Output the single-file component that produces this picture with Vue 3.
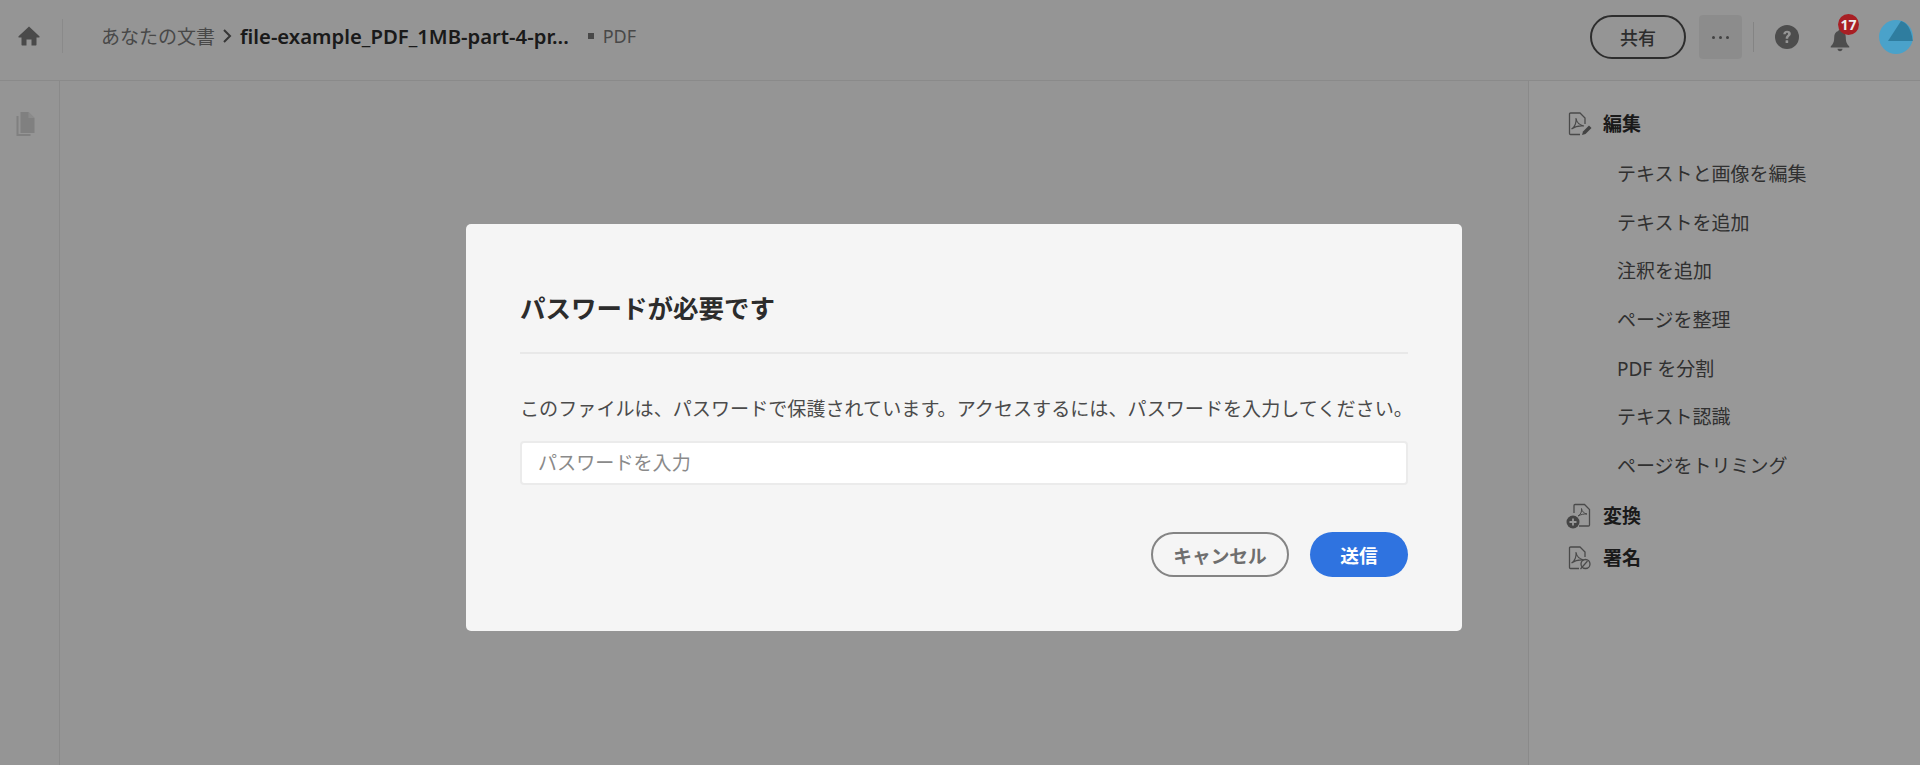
<script setup>
const crumbs = { parent: 'あなたの文書', file: 'file-example_PDF_1MB-part-4-pr...', kind: 'PDF' }
const editItems = ['テキストと画像を編集', 'テキストを追加', '注釈を追加', 'ページを整理', 'PDF を分割', 'テキスト認識', 'ページをトリミング']
</script>

<template>
  <div class="page">
    <header class="topbar">
      <div class="home-cell">
        <svg class="home" viewBox="0 0 22 20" width="22" height="20"><path d="M11 .5.6 10.200c-.5.5-.2 1.300.5 1.300H3.500v7.300c0 .4.3.7.7.7h4.300v-6h5v6h4.300c.4 0 .7-.3.7-.7v-7.300h2.400c.7 0 1-.8.5-1.300z" fill="#7c7c7c" /></svg>
      </div>
      <nav class="crumbs">
        <span class="parent">{{ crumbs.parent }}</span>
        <svg class="chev" viewBox="0 0 10 16" width="10" height="16"><path d="M2 2l6 6-6 6" fill="none" stroke="#5a5a5a" stroke-width="2" /></svg>
        <span class="file">{{ crumbs.file }}</span>
        <span class="dot"></span>
        <span class="kind">{{ crumbs.kind }}</span>
      </nav>
      <div class="actions">
        <button class="share">共有</button>
        <button class="more"><i></i><i></i><i></i></button>
        <span class="vsep"></span>
        <svg class="help" viewBox="0 0 22 22" width="24" height="24"><circle cx="11" cy="11" r="11" fill="#808080" /><path d="M7.600 8.400c0-2 1.500-3.200 3.500-3.200s3.400 1.100 3.400 2.900c0 2.400-2.400 2.400-2.400 4.400H9.800c0-3 2.200-3 2.200-4.400 0-.7-.4-1.100-1-1.100-.7 0-1.100.5-1.100 1.400z" fill="#f8f8f8" /><rect x="9.700" y="14" width="2.400" height="2.600" rx=".5" fill="#f8f8f8" /></svg>
        <div class="bell-wrap">
          <svg class="bell" viewBox="0 0 20 24" width="20" height="24"><path d="M10 1.500c-1 0-1.600.7-1.600 1.600C5.600 3.900 4.200 6.200 4.200 9.200c0 4.800-1.200 7-3.500 9.200v1.100h18.600v-1.100c-2.300-2.200-3.500-4.400-3.500-9.200 0-3-1.400-5.300-4.200-6.100 0-.9-.6-1.600-1.600-1.600z" fill="#808080" /><path d="M7.500 20.700h5c0 1.500-1.100 2.500-2.500 2.500s-2.500-1-2.500-2.500z" fill="#808080" /></svg>
          <span class="badge">17</span>
        </div>
        <svg class="avatar" viewBox="0 0 34 34" width="34" height="34"><circle cx="17" cy="17" r="17" fill="#4aa2ca" /><path d="M9 21 22 1c5 1.500 10 6 11.800 20z" fill="#2f7d9f" /></svg>
      </div>
    </header>

    <div class="body">
      <aside class="rail">
        <svg class="docs" viewBox="0 0 20 24" width="21" height="24"><path d="M5 0h8l6 6v15H5z" fill="#d6d6d6" /><path d="M13 0v6h6z" fill="#e8e8e8" /><path d="M2 4v19h13" fill="none" stroke="#d6d6d6" stroke-width="2" /></svg>
      </aside>
      <main class="canvas"></main>
      <aside class="tools">
        <div class="group head">
          <svg class="gicon" viewBox="0 0 24 24" width="24" height="24"><path d="M12 22.500H2.500a1 1 0 0 1-1-1V2a1 1 0 0 1 1-1h9.500l5 5v6" fill="none" stroke="#7c7c7c" stroke-width="1.300" /><path d="M3.500 17c3-2 5-6 4.500-11 .5 4 3 7 8 8-5-.5-9 .5-12.500 3z" fill="none" stroke="#7c7c7c" stroke-width="1.100" /><path d="m14 23 1-3.500 6-6 2.500 2.500-6 6z" fill="#707070" /></svg>
          <span>編集</span>
        </div>
        <ul class="items">
          <li v-for="item in editItems" :key="item">{{ item }}</li>
        </ul>
        <div class="group convert">
          <svg class="gicon" viewBox="0 0 26 26" width="26" height="26"><path d="M8 10V2.500a1 1 0 0 1 1-1h9.500l5 5V22a1 1 0 0 1-1 1H13" fill="none" stroke="#7c7c7c" stroke-width="1.300" /><path d="M12 13c2.500-1.500 4-4 3.500-7.500.5 3 2.500 5 5.500 5.500-3-.2-6.500.5-9 2z" fill="none" stroke="#7c7c7c" stroke-width="1" /><circle cx="7" cy="19" r="6.500" fill="#737373" /><path d="M3.500 19h7M7 15.500v7" stroke="#fdfdfd" stroke-width="1.800" /></svg>
          <span>変換</span>
        </div>
        <div class="group sign">
          <svg class="gicon" viewBox="0 0 24 24" width="24" height="24"><path d="M11 22.500H2.500a1 1 0 0 1-1-1V2a1 1 0 0 1 1-1h9.500l5 5v5" fill="none" stroke="#7c7c7c" stroke-width="1.300" /><path d="M3.500 17c3-2 5-6 4.500-11 .5 4 3 7 8 8-5-.5-9 .5-12.500 3z" fill="none" stroke="#7c7c7c" stroke-width="1.100" /><circle cx="17.500" cy="18" r="4.500" fill="none" stroke="#7c7c7c" stroke-width="1.300" /><path d="M12.500 23l7-8" stroke="#7c7c7c" stroke-width="1.200" /></svg>
          <span>署名</span>
        </div>
      </aside>
    </div>

    <div class="scrim">
      <section class="dialog">
        <h2 class="title">パスワードが必要です</h2>
        <p class="msg">このファイルは、パスワードで保護されています。アクセスするには、パスワードを入力してください。</p>
        <input class="pw" type="text" placeholder="パスワードを入力" />
        <div class="btns">
          <button class="cancel">キャンセル</button>
          <button class="send">送信</button>
        </div>
      </section>
    </div>
  </div>
</template>

<style>
html, body { margin: 0; background: #f8f8f8; overflow: hidden; }
</style>

<style scoped>
.page {
  position: relative;
  height: 765px;
  display: flex;
  flex-direction: column;
  background: #f8f8f8;
  font-family: "Noto Sans", "Noto Sans CJK JP", sans-serif;
  color: #505050;
}
.topbar {
  height: 80px;
  flex: none;
  display: flex;
  align-items: center;
  border-bottom: 1px solid #e6e6e6;
}
.home-cell {
  width: 63px;
  height: 34px;
  flex: none;
  margin-top: -8px;
  display: flex;
  align-items: center;
  justify-content: center;
  box-sizing: border-box;
  border-right: 1px solid #e6e6e6;
  padding-right: 4px;
}
.crumbs {
  margin-left: 38px;
  margin-top: -8px;
  display: flex;
  align-items: center;
  font-size: 19px;
}
.parent { color: #787878; }
.chev { margin: 0 8px 0 7px; }
.file { font-weight: 600; color: #2c2c2c; font-size: 20.300px; white-space: nowrap; }
.dot { width: 6px; height: 6px; background: #787878; margin: 0 9px 0 19px; }
.kind { color: #787878; font-size: 18px; }
.actions {
  margin-left: auto;
  margin-top: -6px;
  display: flex;
  align-items: center;
  padding-right: 7px;
}
.share {
  width: 96px;
  height: 44px;
  border: 2px solid #4b4b4b;
  border-radius: 22px;
  background: none;
  font: 500 18px "Noto Sans CJK JP", sans-serif;
  color: #4b4b4b;
  padding: 0;
}
.more {
  width: 43px;
  height: 44px;
  margin-left: 13px;
  border: 0;
  border-radius: 4px;
  background: #eaeaea;
  display: flex;
  align-items: center;
  justify-content: center;
  gap: 4px;
  padding: 0;
}
.more i { width: 3px; height: 3px; border-radius: 50%; background: #6e6e6e; }
.vsep { width: 1px; height: 30px; background: #dcdcdc; margin: 0 21px 0 11px; }
.bell-wrap { position: relative; width: 20px; height: 24px; margin: 6px 29px 0 31px; }
.badge {
  position: absolute;
  z-index: 2;
  left: 8px;
  top: -14px;
  width: 21px;
  height: 21px;
  border-radius: 50%;
  background: #a81f24;
  color: #eee;
  font: 700 14px/21px "Noto Sans", sans-serif;
  text-align: center;
}
.avatar { position: relative; z-index: 2; }
.body { flex: 1; display: flex; min-height: 0; }
.rail {
  width: 60px;
  flex: none;
  box-sizing: border-box;
  border-right: 1px solid #e6e6e6;
  padding: 31px 0 0 15px;
}
.docs { display: block; }
.canvas { flex: 1; }
.tools {
  width: 392px;
  flex: none;
  box-sizing: border-box;
  border-left: 1px solid #e6e6e6;
  background: #fdfdfd;
  padding-top: 28px;
}
.group {
  display: flex;
  align-items: center;
  padding-left: 39px;
  font-size: 19px;
  font-weight: 700;
  color: #2c2c2c;
  height: 30px;
  line-height: 30px;
}
.gicon { width: 24px; flex: none; margin-right: 11px; }
.items {
  list-style: none;
  margin: 11px 0 10px;
  padding: 0 0 0 88px;
  font-size: 19px;
  color: #505050;
}
.items li { height: 48.700px; line-height: 48.700px; white-space: nowrap; }
.sign { margin-top: 12px; }
.convert .gicon { width: 26px; margin-left: -2px; }
.scrim {
  position: absolute;
  inset: 0;
  background: rgba(0, 0, 0, 0.4);
  display: flex;
  justify-content: center;
  align-items: flex-start;
  padding: 224px 0 0 8px;
}
.dialog {
  width: 996px;
  height: 407px;
  box-sizing: border-box;
  background: #f5f5f5;
  border-radius: 5px;
  padding: 0 54px;
  display: flex;
  flex-direction: column;
  color: #4b4b4b;
}
.title {
  margin: 0;
  height: 130px;
  box-sizing: border-box;
  padding-top: 63px;
  font-size: 25.500px;
  line-height: 42px;
  font-weight: 700;
  color: #2c2c2c;
  border-bottom: 2px solid #e8e8e8;
}
.msg {
  margin: 40px 0 0;
  font-size: 19.100px;
  line-height: 30px;
  white-space: nowrap;
  color: #4b4b4b;
}
.pw {
  margin-top: 17px;
  height: 44px;
  box-sizing: border-box;
  border: 2px solid #ebebeb;
  border-radius: 4px;
  background: #fff;
  padding: 0 16px;
  font: 19.100px "Noto Sans", "Noto Sans CJK JP", sans-serif;
  outline: none;
  width: 100%;
}
.pw::placeholder { color: #8a8a8a; opacity: 1; }
.btns {
  display: flex;
  justify-content: flex-end;
  gap: 21px;
  margin-top: 47px;
}
.btns button {
  height: 45px;
  border-radius: 23px;
  font: 700 18.700px "Noto Sans", "Noto Sans CJK JP", sans-serif;
  padding: 0;
}
.cancel { width: 138px; border: 2px solid #848484; background: none; color: #6e6e6e; }
.send { width: 98px; border: 0; background: #2f73e0; color: #fff; }
</style>
